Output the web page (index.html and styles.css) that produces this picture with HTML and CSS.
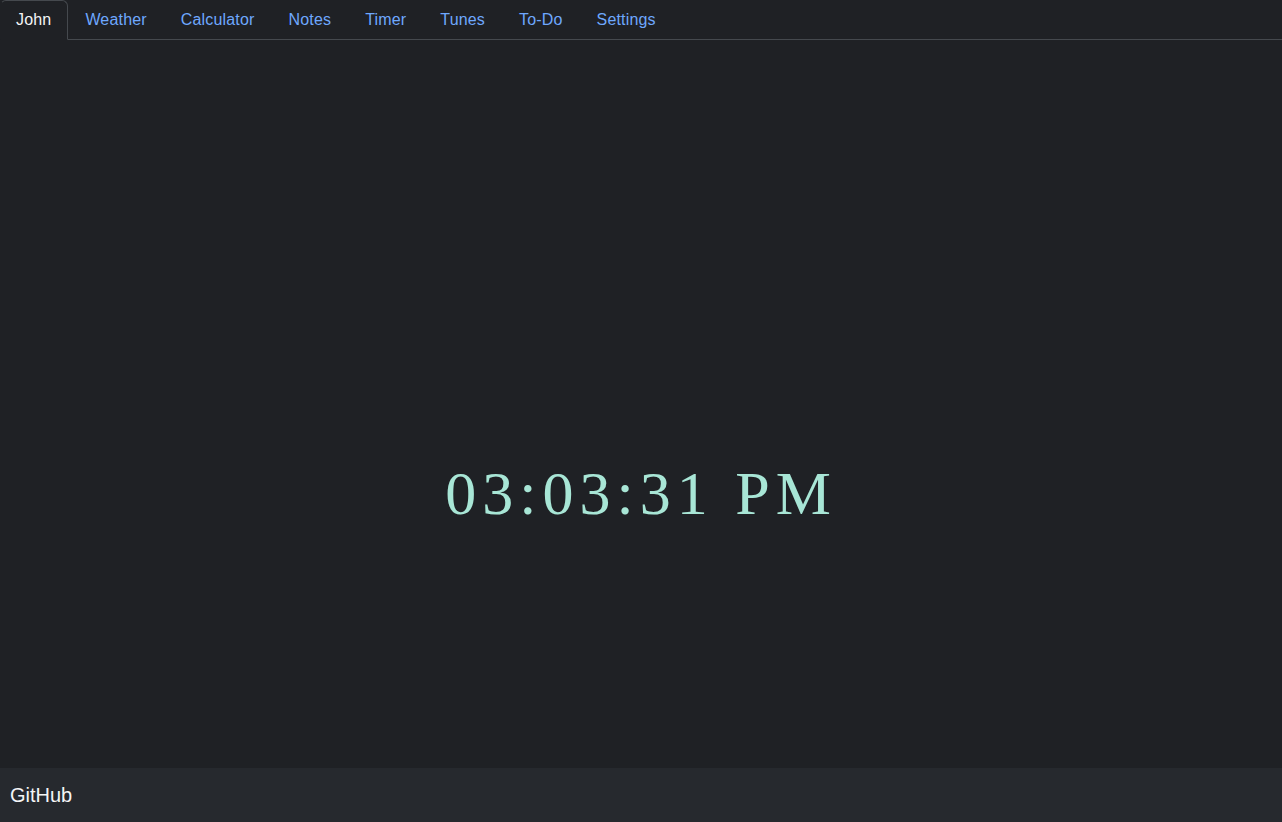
FILE: index.html
```html
<!DOCTYPE html>
<html lang="en">
<head>
<meta charset="utf-8">
<title>Dashboard</title>
<link rel="stylesheet" href="styles.css">
</head>
<body>
<div class="page">
  <nav class="tabs">
    <a class="tab active" href="#">John</a>
    <a class="tab" href="#">Weather</a>
    <a class="tab" href="#">Calculator</a>
    <a class="tab" href="#">Notes</a>
    <a class="tab" href="#">Timer</a>
    <a class="tab" href="#">Tunes</a>
    <a class="tab" href="#">To-Do</a>
    <a class="tab" href="#">Settings</a>
  </nav>
  <main class="main">
    <div class="clock">03:03:31 PM</div>
  </main>
  <footer class="footer">
    <a class="footer-link" href="#">GitHub</a>
  </footer>
</div>
</body>
</html>
```

FILE: styles.css
```css
* { box-sizing: border-box; }
html, body { margin: 0; height: 100%; }
body {
  background: #1f2125;
  color: #dee2e6;
  font-family: "Liberation Sans", Arial, sans-serif;
  font-size: 16px;
}
.page {
  display: flex;
  flex-direction: column;
  height: 822px;
}
.tabs {
  display: flex;
  border-bottom: 1px solid #45494e;
  height: 40px;
}
.tab {
  display: block;
  padding: 7px 16px 9px;
  line-height: 24px;
  letter-spacing: 0.17px;
  color: #6ea8fe;
  text-decoration: none;
  border: 1px solid transparent;
  border-top-left-radius: 6px;
  border-top-right-radius: 6px;
  margin-bottom: -1px;
  height: 40px;
}
.tab.active {
  color: #f4f5f6;
  border-color: #45494e #45494e #1f2125;
  background: #1f2125;
  border-left-color: transparent;
  padding-left: 15px;
}
.main {
  flex: 1;
  display: flex;
  justify-content: center;
  align-items: flex-start;
  padding-top: 417px;
}
.clock {
  font-family: "Liberation Serif", "Times New Roman", serif;
  font-size: 62px;
  line-height: 72px;
  letter-spacing: 6px;
  color: #a8e6d6;
}
.footer {
  height: 54px;
  background: #26292e;
  display: flex;
  align-items: center;
  padding-left: 10px;
}
.footer-link {
  color: #f4f5f6;
  text-decoration: none;
  font-size: 20px;
}
```
